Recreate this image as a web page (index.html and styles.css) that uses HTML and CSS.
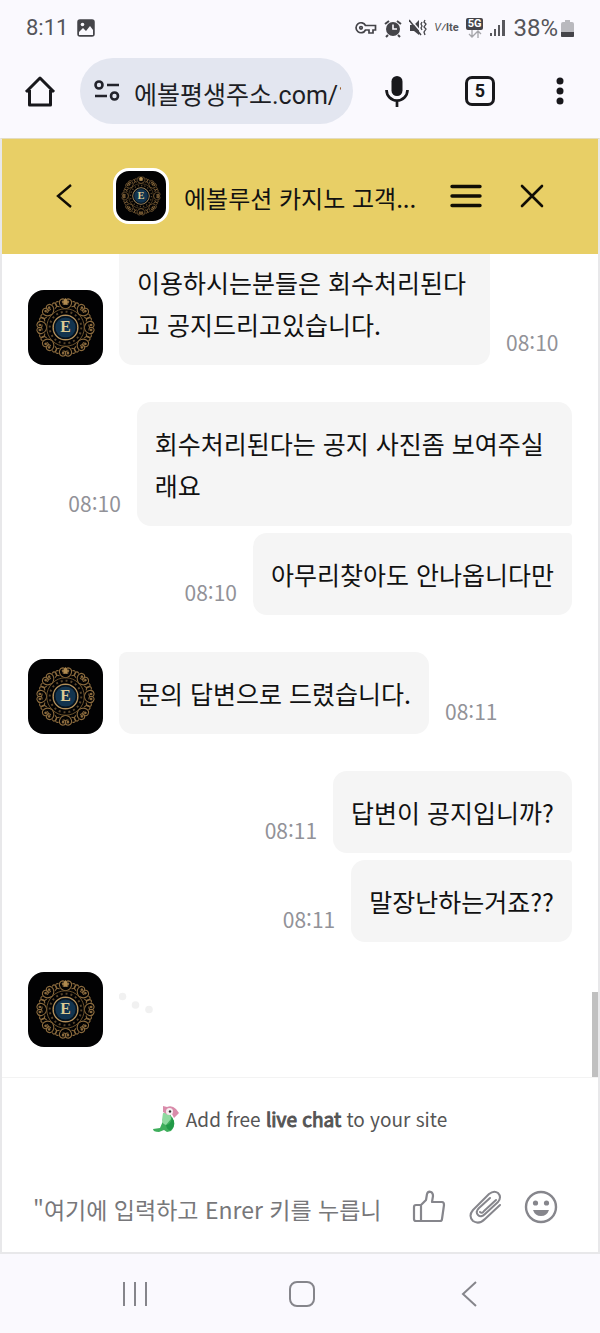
FILE: index.html
```html
<!DOCTYPE html>
<html lang="ko">
<head>
<meta charset="utf-8">
<meta name="viewport" content="width=device-width, initial-scale=1">
<title>고객센터 채팅</title>
<link rel="stylesheet" href="styles.css">
</head>
<body>
<div class="phone">
  <div class="status">
    <span class="clock">8:11</span>
    <svg width="18" height="18" viewBox="0 0 18 18"><rect x="1" y="1" width="16" height="16" rx="2" fill="#444449" stroke="#444449" stroke-width="1.5"/><path d="M2 16v-3l4-4 3 3 4-5 3 4v5z" fill="#faf9fe"/><circle cx="5.500" cy="5.500" r="1.800" fill="#faf9fe"/></svg>
    <div class="indicators">
      <svg width="22" height="14" viewBox="0 0 22 14" fill="none" stroke="#444449" stroke-width="1.700"><path d="M10.500 4.500A5 5 0 1 0 10.500 9H14v3h4V9h2.500V4.500z"/><circle cx="6" cy="6.800" r="1.300"/></svg>
      <svg width="18" height="19" viewBox="0 0 18 19"><circle cx="9" cy="10" r="7" fill="#444449"/><path d="M1 5l4-3M17 5l-4-3M4 16l-2 2M14 16l2 2" stroke="#444449" stroke-width="2"/><path d="M9 5.500V10h4" fill="none" stroke="#faf9fe" stroke-width="1.600"/></svg>
      <svg width="18" height="18" viewBox="0 0 18 18"><path d="M1 6h4l5-5v15l-5-4H1z" fill="#444449"/><path d="M1 0l12 14" stroke="#faf9fe" stroke-width="1.500"/><path d="M0 1l12 15" stroke="#444449" stroke-width="1.500"/><path d="M13 3l-1 2 1 2-1 2 1 2M16 1l-1 2 2 2-2 3 2 2-2 3 1 3" fill="none" stroke="#444449" stroke-width="1.300"/></svg>
      <span class="volte"><i>V</i>⁄lte</span>
      <span class="network"><b>5G</b><svg width="14" height="8" viewBox="0 0 14 8" fill="none" stroke="#a5a5aa" stroke-width="1.300"><path d="M4 0v7M1 4l3 3 3-3M10 8V1M7 4l3-3 3 3"/></svg></span>
      <svg width="16" height="18" viewBox="0 0 16 18" fill="#58585d"><path d="M0 14h2v3H0zM4 10h2v7H4zM8 6h2v11H8zM12 1h3v16h-3z"/></svg>
      <span class="percent">38%</span>
      <svg class="battery" width="13" height="19" viewBox="0 0 13 19"><path d="M4 1h5v2h2q2 0 2 2v12q0 1-1 1H1q-1 0-1-1V5q0-2 2-2h2z" fill="#b9b9be"/><path d="M0 13h13v4q0 1-1 1H1q-1 0-1-1z" fill="#444449"/></svg>
    </div>
  </div>

  <div class="toolbar">
    <button class="tool home" aria-label="홈"><svg width="32" height="32" viewBox="0 0 32 32" fill="none" stroke="#18181c" stroke-width="3"><path d="M2 17L16 3l14 14M5.500 15v15h21V15" stroke-linejoin="round"/></svg></button>
    <label class="address">
      <svg width="26" height="22" viewBox="0 0 26 22" fill="none" stroke="#22232b" stroke-width="2.600"><circle cx="5" cy="5" r="3.500"/><circle cx="20.500" cy="16" r="3.500"/><path d="M13 5h12M1 16h12"/></svg>
      <input type="text" value="에볼평생주소.com/1" aria-label="주소">
    </label>
    <button class="tool mic" aria-label="음성 검색"><svg width="24" height="33" viewBox="0 0 24 33"><rect x="6.500" y="1" width="11" height="20" rx="5.500" fill="#18181c"/><path d="M1.500 15a10.500 10.500 0 0 0 21 0M12 25v7" fill="none" stroke="#18181c" stroke-width="2.700"/></svg></button>
    <button class="tool tabs" aria-label="탭 5개"><span class="tab-count">5</span></button>
    <button class="tool more" aria-label="더보기"><svg width="8" height="28" viewBox="0 0 8 28" fill="#18181c"><circle cx="4" cy="4" r="3.500"/><circle cx="4" cy="14" r="3.500"/><circle cx="4" cy="24" r="3.500"/></svg></button>
  </div>

  <main class="chat">
    <header class="chat-head">
      <button class="back" aria-label="뒤로"><svg width="17" height="24" viewBox="0 0 17 24"><path d="M15 1L2 12l13 11" fill="none" stroke="#100d05" stroke-width="2.400"/></svg></button>
      <svg class="head-avatar" viewBox="-38 -38 76 76">
        <g id="crest">
          <g id="half" fill="none" stroke="#8a6a3d" stroke-width="1.100">
            <g id="pair">
              <g id="lobe">
                <path d="M0-19q-5-1-6-5t3-5q3 0 3 3t-3 2M0-19q5-1 6-5t-3-5q-3 0-3 3t3 2"/>
                <path d="M-6-21q-4 0-4-3t3-2M6-21q4 0 4-3t-3-2M0-28v4"/>
                <circle cx="-2.500" cy="-26" r=".8" fill="#b08b52"/>
                <circle cx="2.500" cy="-26" r=".8" fill="#b08b52"/>
              </g>
              <use href="#lobe" transform="rotate(45)"/>
            </g>
            <use href="#pair" transform="rotate(90)"/>
          </g>
          <use href="#half" transform="rotate(180)"/>
          <circle r="19" fill="none" stroke="#6d532d" stroke-width="1"/>
          <circle r="16" fill="none" stroke="#57442a" stroke-width="2" stroke-dasharray="2 3"/>
          <path d="M-2-23v-4l2-3 2 3v4z" fill="#b08b50"/>
          <circle r="12.500" fill="#12344f" stroke="#b08d58" stroke-width="1.500"/>
          <circle r="11" fill="none" stroke="#06111b" stroke-width="1.500"/>
          <text y="5" text-anchor="middle" class="crest-letter">E</text>
        </g>
      </svg>
      <h1>에볼루션 카지노 고객...</h1>
      <button class="head-btn" aria-label="메뉴"><svg width="32" height="24" viewBox="0 0 32 24"><path d="M2 2.500h28M2 12h28M2 21.500h28" stroke="#100d05" stroke-width="3.400" stroke-linecap="round"/></svg></button>
      <button class="head-btn" aria-label="닫기"><svg width="24" height="24" viewBox="0 0 24 24"><path d="M2 2l20 20M22 2L2 22" stroke="#100d05" stroke-width="2.600" stroke-linecap="round"/></svg></button>
    </header>

    <section class="thread">
      <div class="group">
        <div class="row agent"><svg class="avatar" viewBox="-38 -38 76 76"><use href="#crest"/></svg><p class="bubble continued">이용하시는분들은 회수처리된다고 공지드리고있습니다.</p><time>08:10</time></div>
      </div>
      <div class="group">
        <div class="row user"><time>08:10</time><p class="bubble first">회수처리된다는 공지 사진좀 보여주실래요</p></div>
        <div class="row user"><time>08:10</time><p class="bubble last">아무리찾아도 안나옵니다만</p></div>
      </div>
      <div class="group">
        <div class="row agent"><svg class="avatar" viewBox="-38 -38 76 76"><use href="#crest"/></svg><p class="bubble">문의 답변으로 드렸습니다.</p><time>08:11</time></div>
      </div>
      <div class="group">
        <div class="row user"><time>08:11</time><p class="bubble first">답변이 공지입니까?</p></div>
        <div class="row user"><time>08:11</time><p class="bubble last">말장난하는거죠??</p></div>
      </div>
      <div class="row agent typing"><svg class="avatar" viewBox="-38 -38 76 76"><use href="#crest"/></svg><svg width="38" height="75" viewBox="0 0 38 75" fill="#f1f1f1"><circle cx="3.500" cy="24.500" r="3.800"/><circle cx="16.500" cy="33" r="3.800"/><circle cx="30" cy="37.500" r="3.800"/></svg></div>
      <div class="scroll-thumb"></div>
    </section>

    <footer class="chat-foot">
      <a class="promo" href="#">
        <svg width="26" height="28" viewBox="0 0 26 28"><path d="M10 8v8l-3 7-7 1q0 3 6 3l5-2 3 2 4-1q4-4 3-10l-4-7z" fill="#3fae5c"/><path d="M10 8h7l1 6-5 6q-4-1-4-5z" fill="#8fdaa0"/><path d="M13 20q5 0 6-8 5 8-1 13-4 1-5-5z" fill="#229a48"/><path d="M10 1l4 1q5-2 9 2l3 4-5 5-2-4-4 1-5-3z" fill="#d98baa"/><circle cx="16.500" cy="6.500" r="3.500" fill="#f5eef0"/><circle cx="17" cy="6.500" r="1.200" fill="#333"/></svg>
        <span>Add free <b>live chat</b> to your site</span>
      </a>
      <div class="composer">
        <input type="text" aria-label="메시지" placeholder="&quot;여기에 입력하고 Enrer 키를 누릅니">
        <button aria-label="좋아요"><svg width="34" height="34" viewBox="0 0 34 34" fill="none" stroke="#86868c" stroke-width="2.200" stroke-linejoin="round"><path d="M9 15l5-5 1-6q1-3 4-2 2 1 2 4l-1 6h10q2 0 2 3l-2 14q0 2-2 2H9zM9 15H4q-2 0-2 2v12q0 2 2 2h5"/></svg></button>
        <button aria-label="파일 첨부"><svg width="34" height="34" viewBox="0 0 34 34" fill="none" stroke="#86868c" stroke-width="2" stroke-linecap="round" stroke-linejoin="round"><path d="M32 15L17 29q-6 6-12 2-5-5 0-11L21 4q5-4 9-1 4 4 0 9L17 24q-4 4-7 1-3-3 1-7L22 8M12 22q2 2 4-1L28 10"/></svg></button>
        <button aria-label="이모티콘"><svg width="34" height="34" viewBox="0 0 34 34"><circle cx="17" cy="17" r="15" fill="none" stroke="#86868c" stroke-width="2.400"/><circle cx="11.500" cy="13" r="2.600" fill="#86868c"/><circle cx="22.500" cy="13" r="2.600" fill="#86868c"/><path d="M9 20h16q-2 6-8 6t-8-6z" fill="#86868c"/></svg></button>
      </div>
    </footer>
  </main>

  <nav class="system-nav">
    <button aria-label="최근 앱"><svg width="26" height="26" viewBox="0 0 26 26"><path d="M2 1v24M13 1v24M24 1v24" stroke="#85858b" stroke-width="2"/></svg></button>
    <button aria-label="홈 화면"><svg width="26" height="26" viewBox="0 0 26 26"><rect x="1" y="1" width="24" height="24" rx="7" fill="none" stroke="#85858b" stroke-width="2"/></svg></button>
    <button aria-label="이전"><svg width="16" height="26" viewBox="0 0 16 26"><path d="M15 1L2 13l13 12" fill="none" stroke="#85858b" stroke-width="2"/></svg></button>
  </nav>
</div>
</body>
</html>
```
FILE: styles.css
```css
* { box-sizing: border-box; }
body { margin: 0; background: #faf9fe; color: #111; font-family: "Noto Sans CJK KR", sans-serif; }
button { display: flex; align-items: center; justify-content: center; padding: 0; border: 0; background: none; }
input { min-width: 0; padding: 0; border: 0; outline: 0; background: none; }
svg { display: block; flex: none; }
.crest-letter { font: bold 16px "Liberation Serif", serif; fill: #dccb94; }
.phone { display: flex; flex-direction: column; min-height: 100vh; }

.status { display: flex; align-items: center; gap: 9px; height: 56px; padding: 0 26px; color: #55555a; font: 22px/28px Roboto, sans-serif; }
.clock { font-size: 22px; }
.percent { font-size: 24px; }
.indicators { display: flex; align-items: center; gap: 7px; margin-left: auto; }
.battery { margin-left: -4px; }
.volte { font: bold 11px/16px Roboto, sans-serif; }
.volte i { font-weight: 400; }
.network { display: flex; flex-direction: column; align-items: center; }
.network b { padding: 0 2px; border-radius: 2px; background: #444449; color: #fff; font: bold 11px/12px Roboto, sans-serif; }

.toolbar { display: flex; align-items: center; height: 82px; padding: 2px 0 14px; }
.tool { height: 60px; }
.home { width: 80px; }
.mic { width: 88px; }
.tabs { width: 78px; }
.more { width: 81px; }
.address { display: flex; flex: 1; align-items: center; gap: 14px; min-width: 0; height: 66px; padding: 0 12px 0 14px; border-radius: 33px; background: #e3e6f0; }
.address input { flex: 1; height: 44px; padding-top: 4px; color: #1d1e25; font: 25px/40px Roboto, "Noto Sans CJK KR", sans-serif; }
.tab-count { width: 30px; height: 30px; border: 3px solid #18181c; border-radius: 7px; color: #18181c; font: bold 18px/24px Roboto, sans-serif; }

.chat { display: flex; flex: 1; flex-direction: column; border: 2px solid #e8e8ea; border-top: 1px solid #e3dcc0; background: #fff; }
.chat-head { display: flex; align-items: center; height: 115px; padding: 0 33px 2px 40px; background: #e8cf66; }
.back { width: 44px; height: 44px; margin-right: 27px; }
.head-avatar { width: 56px; height: 56px; border: 3px solid #fff; border-radius: 16px; background: #020203; }
.chat-head h1 { flex: 1; min-width: 0; margin: 4px 0 0 15px; overflow: hidden; font-size: 24px; font-weight: 400; line-height: 36px; white-space: nowrap; }
.head-btn { width: 66px; height: 60px; }

.thread { position: relative; display: flex; flex: 1; flex-direction: column; gap: 37px; padding: 0 26px 29px; }
.group { display: flex; flex-direction: column; gap: 7px; }
.row { display: flex; align-items: flex-end; gap: 16px; }
.user { justify-content: flex-end; }
.typing { margin-top: -7px; }
.avatar { width: 75px; height: 75px; border-radius: 16px; background: #020203; }
.bubble { max-width: 80%; margin: 0; padding: 20px 18px; border-radius: 14px; background: #f5f5f5; font-size: 25px; line-height: 42px; word-break: break-all; }
.agent .bubble { max-width: 371px; border-radius: 8px 14px 14px 14px; }
.bubble.continued { padding-top: 7px; border-top-left-radius: 0; border-top-right-radius: 0; }
.user .first { border-bottom-right-radius: 4px; }
.user .last { border-top-right-radius: 4px; }
time { flex: none; margin-bottom: 7px; color: #929298; font-size: 21px; line-height: 32px; }
.scroll-thumb { position: absolute; right: 0; bottom: 0; width: 6px; height: 85px; background: #c0c0c0; }

.chat-foot { border-top: 1px solid #f3f3f3; }
.promo { display: flex; align-items: center; justify-content: center; gap: 7px; height: 82px; color: #555; font-size: 19px; line-height: 30px; text-decoration: none; }
.promo b { font-weight: 400; -webkit-text-stroke: 1px #555; }
.composer { display: flex; align-items: center; height: 92px; padding: 2px 40px 0 31px; }
.composer input { flex: 1; height: 40px; margin: 4px 28px 0 0; color: #333; font: 23px/40px "Noto Sans CJK KR", sans-serif; }
.composer input::placeholder { color: #77777a; opacity: 1; }
.composer button { width: 34px; height: 50px; margin-left: 22px; }
.composer input + button { margin-left: 0; }

.system-nav { display: flex; justify-content: center; height: 79px; padding-left: 4px; }
.system-nav button { width: 28%; }
```
